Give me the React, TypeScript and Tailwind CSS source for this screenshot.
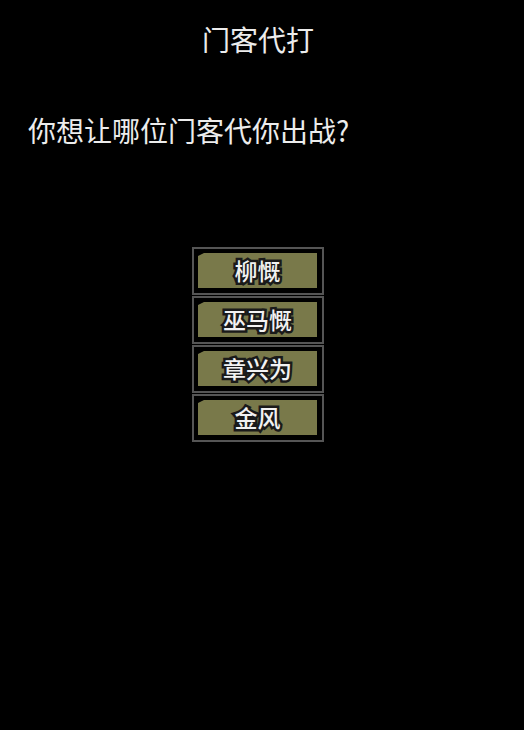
const heroes = ["柳慨", "巫马慨", "章兴为", "金风"];

const HeroButton = ({ name }: { name: string }) => {
  return (
    <button className="w-[132px] h-[48px] border-2 border-[#555555] bg-black pt-[4px] pl-[4px] pr-[5px] pb-[5px]">
      <div className="w-full h-full bg-[#79794a] flex items-center justify-center [clip-path:polygon(0_3px,6px_0,100%_0,100%_100%,0_100%)]">
        <span className="text-[23px] leading-[23px] font-medium text-[#f2f2f2] [-webkit-text-stroke:5px_#1a1a1a] [paint-order:stroke_fill]">
          {name}
        </span>
      </div>
    </button>
  );
};

export default function App() {
  return (
    <div
      className="min-h-[730px] w-full bg-black text-[#ececec]"
      style={{ fontFamily: '"Noto Sans CJK SC", "Noto Sans", sans-serif' }}>
      <div className="w-[516px]">
        <h1 className="pt-[25px] text-center text-[28px] leading-[28px] font-normal">门客代打</h1>
        <p className="mt-[63px] pl-[28px] text-[28px] leading-[28px]">你想让哪位门客代你出战?</p>
        <div className="mt-[103px] flex flex-col items-center gap-[1px]">
          {heroes.map(hero => (
            <HeroButton key={hero} name={hero} />
          ))}
        </div>
      </div>
    </div>
  );
}
